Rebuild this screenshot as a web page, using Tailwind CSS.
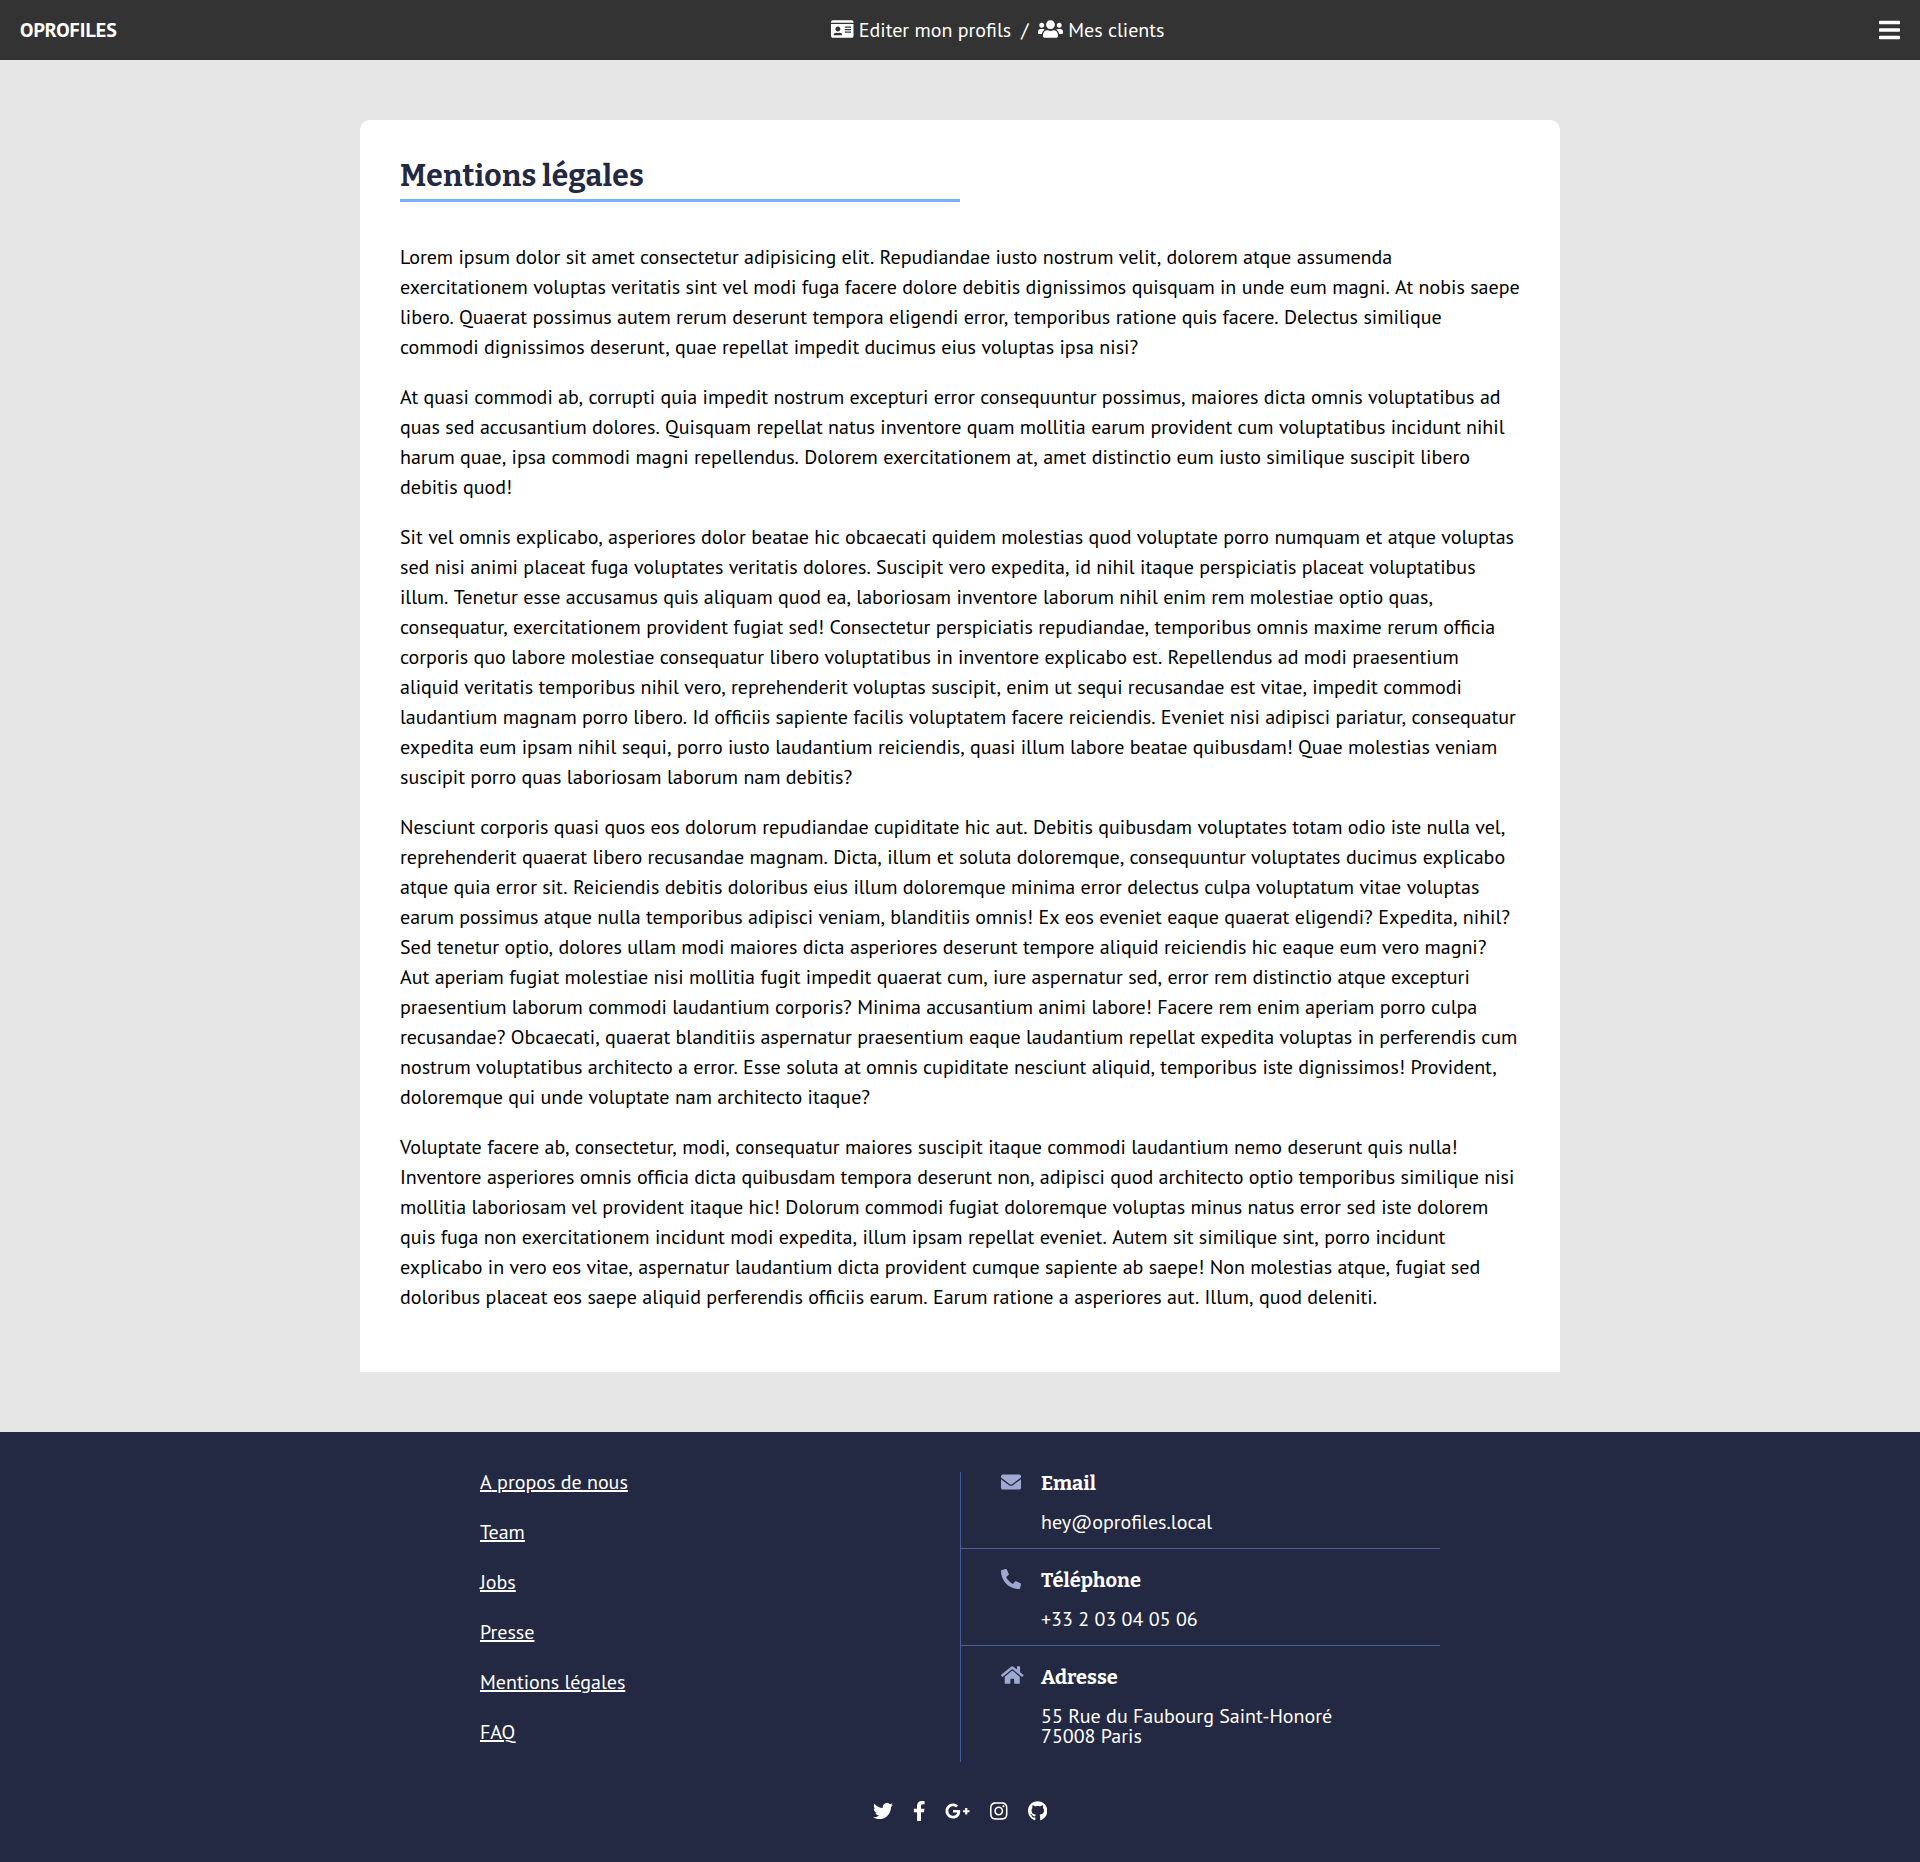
<!DOCTYPE html>
<html lang="fr">
<head>
<meta charset="utf-8">
<title>OPROFILES - Mentions légales</title>
<script src="https://cdn.jsdelivr.net/npm/@tailwindcss/browser@4"></script>
</head>
<body class="bg-[#e6e6e6] text-black text-[20px] leading-[20px] font-['PT_Sans','Noto_Sans',sans-serif]">
<header class="h-[60px] bg-[#333] text-white flex items-center justify-between px-5">
  <a class="font-bold">OPROFILES</a>
  <nav class="flex items-center">
    <a class="flex items-center"><svg class="h-5 w-[22.5px] mr-[5px] -mt-[2px]" viewBox="0 0 576 512" fill="currentColor"><path d="M528 32H48C21.500 32 0 53.500 0 80v16h576V80c0-26.500-21.500-48-48-48zM0 432c0 26.500 21.500 48 48 48h480c26.500 0 48-21.500 48-48V128H0v304zm352-232c0-4.400 3.600-8 8-8h144c4.400 0 8 3.600 8 8v16c0 4.400-3.600 8-8 8H360c-4.400 0-8-3.600-8-8v-16zm0 64c0-4.400 3.600-8 8-8h144c4.400 0 8 3.600 8 8v16c0 4.400-3.600 8-8 8H360c-4.400 0-8-3.600-8-8v-16zm0 64c0-4.400 3.600-8 8-8h144c4.400 0 8 3.600 8 8v16c0 4.400-3.600 8-8 8H360c-4.400 0-8-3.600-8-8v-16zM176 192c35.300 0 64 28.700 64 64s-28.700 64-64 64-64-28.700-64-64 28.700-64 64-64zM67.100 396.200C75.500 370.500 99.600 352 128 352h8.200c12.300 5.100 25.700 8 39.800 8s27.600-2.900 39.800-8h8.200c28.400 0 52.500 18.500 60.900 44.200 3.200 9.900-5.200 19.800-15.600 19.800H82.700c-10.400 0-18.800-10-15.600-19.800z"/></svg>Editer mon profils</a>
    <span class="px-[10px]">/</span>
    <a class="flex items-center"><svg class="h-5 w-[25px] mr-[5px] -mt-[2px]" viewBox="0 0 640 512" fill="currentColor"><path d="M96 224c35.300 0 64-28.700 64-64s-28.700-64-64-64-64 28.700-64 64 28.700 64 64 64zm448 0c35.300 0 64-28.700 64-64s-28.700-64-64-64-64 28.700-64 64 28.700 64 64 64zm32 32h-64c-17.600 0-33.500 7.100-45.100 18.600 40.300 22.100 68.900 62 75.100 109.400h66c17.700 0 32-14.300 32-32v-32c0-35.300-28.700-64-64-64zm-256 0c61.900 0 112-50.100 112-112S381.900 32 320 32 208 82.100 208 144s50.100 112 112 112zm76.800 32h-8.300c-20.800 10-43.900 16-68.500 16s-47.600-6-68.500-16h-8.300C179.600 288 128 339.600 128 403.200V432c0 26.500 21.500 48 48 48h288c26.500 0 48-21.500 48-48v-28.800c0-63.600-51.600-115.200-115.200-115.200zm-223.700-13.400C161.500 263.100 145.600 256 128 256H64c-35.300 0-64 28.700-64 64v32c0 17.700 14.300 32 32 32h65.900c6.300-47.400 34.900-87.300 75.200-109.400z"/></svg>Mes clients</a>
  </nav>
  <button aria-label="Menu"><svg class="h-6 w-[21px]" viewBox="0 0 448 512" fill="currentColor"><path d="M16 132h416c8.837 0 16-7.163 16-16V76c0-8.837-7.163-16-16-16H16C7.163 60 0 67.163 0 76v40c0 8.837 7.163 16 16 16zm0 160h416c8.837 0 16-7.163 16-16v-40c0-8.837-7.163-16-16-16H16c-8.837 0-16 7.163-16 16v40c0 8.837 7.163 16 16 16zm0 160h416c8.837 0 16-7.163 16-16v-40c0-8.837-7.163-16-16-16H16c-8.837 0-16 7.163-16 16v40c0 8.837 7.163 16 16 16z"/></svg></button>
</header>

<main class="py-[60px]">
  <article class="w-[1200px] mx-auto bg-white rounded-t-[10px] p-10 leading-[30px]">
    <h1 class="w-[560px] h-[42px] pt-px border-b-[3px] border-[#74b0fc] mb-10 text-[30px] leading-[30px] tracking-[0.25px] font-bold text-[#242943] font-['Bitter','Noto_Serif',serif]">Mentions légales</h1>
    <div id="legal" class="whitespace-nowrap">
    <p class="mb-5">Lorem ipsum dolor sit amet consectetur adipisicing elit. Repudiandae iusto nostrum velit, dolorem atque assumenda<br>exercitationem voluptas veritatis sint vel modi fuga facere dolore debitis dignissimos quisquam in unde eum magni. At nobis saepe<br>libero. Quaerat possimus autem rerum deserunt tempora eligendi error, temporibus ratione quis facere. Delectus similique<br>commodi dignissimos deserunt, quae repellat impedit ducimus eius voluptas ipsa nisi?</p>
    <p class="mb-5">At quasi commodi ab, corrupti quia impedit nostrum excepturi error consequuntur possimus, maiores dicta omnis voluptatibus ad<br>quas sed accusantium dolores. Quisquam repellat natus inventore quam mollitia earum provident cum voluptatibus incidunt nihil<br>harum quae, ipsa commodi magni repellendus. Dolorem exercitationem at, amet distinctio eum iusto similique suscipit libero<br>debitis quod!</p>
    <p class="mb-5">Sit vel omnis explicabo, asperiores dolor beatae hic obcaecati quidem molestias quod voluptate porro numquam et atque voluptas<br>sed nisi animi placeat fuga voluptates veritatis dolores. Suscipit vero expedita, id nihil itaque perspiciatis placeat voluptatibus<br>illum. Tenetur esse accusamus quis aliquam quod ea, laboriosam inventore laborum nihil enim rem molestiae optio quas,<br>consequatur, exercitationem provident fugiat sed! Consectetur perspiciatis repudiandae, temporibus omnis maxime rerum officia<br>corporis quo labore molestiae consequatur libero voluptatibus in inventore explicabo est. Repellendus ad modi praesentium<br>aliquid veritatis temporibus nihil vero, reprehenderit voluptas suscipit, enim ut sequi recusandae est vitae, impedit commodi<br>laudantium magnam porro libero. Id officiis sapiente facilis voluptatem facere reiciendis. Eveniet nisi adipisci pariatur, consequatur<br>expedita eum ipsam nihil sequi, porro iusto laudantium reiciendis, quasi illum labore beatae quibusdam! Quae molestias veniam<br>suscipit porro quas laboriosam laborum nam debitis?</p>
    <p class="mb-5">Nesciunt corporis quasi quos eos dolorum repudiandae cupiditate hic aut. Debitis quibusdam voluptates totam odio iste nulla vel,<br>reprehenderit quaerat libero recusandae magnam. Dicta, illum et soluta doloremque, consequuntur voluptates ducimus explicabo<br>atque quia error sit. Reiciendis debitis doloribus eius illum doloremque minima error delectus culpa voluptatum vitae voluptas<br>earum possimus atque nulla temporibus adipisci veniam, blanditiis omnis! Ex eos eveniet eaque quaerat eligendi? Expedita, nihil?<br>Sed tenetur optio, dolores ullam modi maiores dicta asperiores deserunt tempore aliquid reiciendis hic eaque eum vero magni?<br>Aut aperiam fugiat molestiae nisi mollitia fugit impedit quaerat cum, iure aspernatur sed, error rem distinctio atque excepturi<br>praesentium laborum commodi laudantium corporis? Minima accusantium animi labore! Facere rem enim aperiam porro culpa<br>recusandae? Obcaecati, quaerat blanditiis aspernatur praesentium eaque laudantium repellat expedita voluptas in perferendis cum<br>nostrum voluptatibus architecto a error. Esse soluta at omnis cupiditate nesciunt aliquid, temporibus iste dignissimos! Provident,<br>doloremque qui unde voluptate nam architecto itaque?</p>
    <p class="mb-5">Voluptate facere ab, consectetur, modi, consequatur maiores suscipit itaque commodi laudantium nemo deserunt quis nulla!<br>Inventore asperiores omnis officia dicta quibusdam tempora deserunt non, adipisci quod architecto optio temporibus similique nisi<br>mollitia laboriosam vel provident itaque hic! Dolorum commodi fugiat doloremque voluptas minus natus error sed iste dolorem<br>quis fuga non exercitationem incidunt modi expedita, illum ipsam repellat eveniet. Autem sit similique sint, porro incidunt<br>explicabo in vero eos vitae, aspernatur laudantium dicta provident cumque sapiente ab saepe! Non molestias atque, fugiat sed<br>doloribus placeat eos saepe aliquid perferendis officiis earum. Earum ratione a asperiores aut. Illum, quod deleniti.</p>
    </div>
  </article>
</main>

<footer class="bg-[#242943] text-white pt-10 pb-[41px]">
  <div class="w-[960px] mx-auto grid grid-cols-2">
    <ul class="flex flex-col gap-[30px] underline">
      <li><a>A<span class="tracking-[0.01px]"> </span>propos de nous</a></li>
      <li><a>Team</a></li>
      <li><a>Jobs</a></li>
      <li><a>Presse</a></li>
      <li><a>Mentions légales</a></li>
      <li><a>FAQ</a></li>
    </ul>
    <div class="border-l border-[#4d5d9c]">
      <section class="flex pl-10 pb-4 border-b border-[#4d5d9c]">
        <div class="w-10 text-[#9fa8d0]"><svg class="size-5" viewBox="0 0 512 512" fill="currentColor"><path d="M502.300 190.800c3.900-3.100 9.700-.2 9.700 4.700V400c0 26.500-21.500 48-48 48H48c-26.500 0-48-21.500-48-48V195.600c0-5 5.700-7.800 9.700-4.700 22.400 17.400 52.100 39.500 154.100 113.600 21.100 15.400 56.700 47.800 92.200 47.600 35.700.3 72-32.800 92.300-47.600 102-74.100 131.600-96.300 154-113.700zM256 320c23.200.4 56.600-29.200 73.400-41.400 132.700-96.300 142.800-104.700 173.400-128.700 5.800-4.500 9.200-11.500 9.200-18.900v-19c0-26.500-21.500-48-48-48H48c-26.500 0-48 21.500-48 48v19c0 7.400 3.400 14.300 9.200 18.900 30.600 23.900 40.700 32.400 173.400 128.700 16.800 12.200 50.200 41.800 73.400 41.400z"/></svg></div>
        <div><h2 class="pt-px mb-[19px] font-bold font-['Bitter','Noto_Serif',serif]">Email</h2><p>hey@oprofiles.local</p></div>
      </section>
      <section class="flex pl-10 pt-5 pb-4 border-b border-[#4d5d9c]">
        <div class="w-10 text-[#9fa8d0]"><svg class="size-5" viewBox="0 0 512 512" fill="currentColor"><path transform="matrix(-1 0 0 1 512 0)" d="M493.400 24.600l-104-24c-11.300-2.600-22.900 3.300-27.500 13.900l-48 112c-4.200 9.800-1.400 21.300 6.900 28l60.600 49.600c-36 76.700-98.900 140.500-177.200 177.200l-49.600-60.600c-6.800-8.300-18.200-11.100-28-6.900l-112 48C3.900 366.500-2 378.100.6 389.400l24 104C27.100 504.200 36.700 512 48 512c256.100 0 464-207.500 464-464 0-11.200-7.700-20.900-18.600-23.400z"/></svg></div>
        <div><h2 class="pt-px mb-[19px] font-bold font-['Bitter','Noto_Serif',serif]">Téléphone</h2><p>+33 2 03 04 05 06</p></div>
      </section>
      <section class="flex pl-10 pt-5 pb-4">
        <div class="w-10 text-[#9fa8d0]"><svg class="h-5 w-[22.5px] -mt-px" viewBox="0 0 576 512" fill="currentColor"><path d="M280.370 148.260L96 300.110V464a16 16 0 0 0 16 16l112.060-.29a16 16 0 0 0 15.920-16V368a16 16 0 0 1 16-16h64a16 16 0 0 1 16 16v95.640a16 16 0 0 0 16 16.050L464 480a16 16 0 0 0 16-16V300L295.670 148.260a12.190 12.190 0 0 0-15.300 0zM571.600 251.470L488 182.560V44.050a12 12 0 0 0-12-12h-56a12 12 0 0 0-12 12v72.610L318.470 43a48 48 0 0 0-61 0L4.340 251.470a12 12 0 0 0-1.600 16.900l25.500 31A12 12 0 0 0 45.150 301l235.220-193.740a12.190 12.190 0 0 1 15.300 0L530.900 301a12 12 0 0 0 16.900-1.600l25.500-31a12 12 0 0 0-1.700-16.930z"/></svg></div>
        <div><h2 class="pt-px mb-[19px] font-bold font-['Bitter','Noto_Serif',serif]">Adresse</h2><p>55 Rue du Faubourg Saint-Honoré<br>75008 Paris</p></div>
      </section>
    </div>
  </div>
  <div class="mt-[39px] flex justify-center gap-5">
    <svg class="size-5" viewBox="0 0 512 512" fill="currentColor"><path d="M459.370 151.716c.325 4.548.325 9.097.325 13.645 0 138.720-105.583 298.558-298.558 298.558-59.452 0-114.680-17.219-161.137-47.106 8.447.974 16.568 1.299 25.340 1.299 49.055 0 94.213-16.568 130.274-44.832-46.132-.975-84.792-31.188-98.112-72.772 6.498.974 12.995 1.624 19.818 1.624 9.421 0 18.843-1.300 27.614-3.573-48.081-9.747-84.143-51.980-84.143-102.985v-1.299c13.969 7.797 30.214 12.670 47.431 13.319-28.264-18.843-46.781-51.005-46.781-87.391 0-19.492 5.197-37.360 14.294-52.954 51.655 63.675 129.300 105.258 216.365 109.807-1.624-7.797-2.599-15.918-2.599-24.040 0-57.828 46.782-104.934 104.934-104.934 30.213 0 57.502 12.670 76.670 33.137 23.715-4.548 46.456-13.320 66.599-25.340-7.798 24.366-24.366 44.833-46.132 57.827 21.117-2.273 41.584-8.122 60.426-16.243-14.292 20.791-32.161 39.308-52.628 54.253z"/></svg>
    <svg class="h-5 w-[12.5px]" viewBox="0 0 320 512" fill="currentColor"><path d="M279.140 288l14.220-92.660h-88.910v-60.130c0-25.350 12.420-50.060 52.240-50.060h40.420V6.260S260.430 0 225.360 0c-73.220 0-121.080 44.380-121.080 124.720v70.620H22.890V288h81.390v224h100.170V288z"/></svg>
    <svg class="h-5 w-[25px]" viewBox="0 0 640 512" fill="currentColor"><path d="M386.061 228.496c1.834 9.692 3.143 19.384 3.143 31.956C389.204 370.205 315.599 448 204.800 448c-106.084 0-192-85.915-192-192s85.916-192 192-192c51.864 0 95.083 18.859 128.611 50.292l-52.126 50.030c-14.145-13.621-39.028-29.599-76.485-29.599-65.484 0-118.920 54.221-118.920 121.277 0 67.056 53.436 121.277 118.920 121.277 75.961 0 104.513-54.745 108.965-82.773H204.800v-66.009h181.261zm185.406 6.437V179.200h-56.001v55.733h-55.733v56.001h55.733v55.733h56.001v-55.733H627.200v-56.001h-55.733z"/></svg>
    <svg class="h-5 w-[17.5px]" viewBox="0 0 448 512" fill="currentColor"><path d="M224.100 141c-63.600 0-114.900 51.300-114.900 114.900s51.300 114.900 114.900 114.900S339 319.500 339 255.900 287.700 141 224.100 141zm0 189.600c-41.100 0-74.700-33.500-74.700-74.700s33.500-74.700 74.700-74.700 74.700 33.500 74.700 74.700-33.600 74.700-74.700 74.700zm146.400-194.300c0 14.900-12 26.800-26.800 26.800-14.900 0-26.800-12-26.800-26.800s12-26.800 26.800-26.800 26.800 12 26.800 26.800zm76.100 27.200c-1.700-35.900-9.900-67.700-36.200-93.900-26.200-26.200-58-34.400-93.900-36.200-37-2.100-147.900-2.100-184.900 0-35.800 1.700-67.600 9.900-93.900 36.100s-34.400 58-36.200 93.900c-2.100 37-2.100 147.900 0 184.900 1.700 35.900 9.900 67.700 36.200 93.900s58 34.400 93.900 36.200c37 2.100 147.900 2.100 184.900 0 35.900-1.700 67.700-9.900 93.900-36.200 26.200-26.200 34.400-58 36.200-93.900 2.100-37 2.100-147.800 0-184.800zM398.800 388c-7.800 19.600-22.900 34.700-42.600 42.600-29.500 11.700-99.500 9-132.100 9s-102.700 2.600-132.100-9c-19.600-7.800-34.700-22.900-42.600-42.600-11.700-29.500-9-99.500-9-132.100s-2.600-102.700 9-132.100c7.800-19.600 22.900-34.700 42.600-42.600 29.500-11.700 99.500-9 132.100-9s102.700-2.600 132.100 9c19.600 7.800 34.700 22.900 42.600 42.600 11.700 29.500 9 99.500 9 132.100s2.700 102.700-9 132.100z"/></svg>
    <svg class="h-5 w-[19.375px]" viewBox="0 0 496 512" fill="currentColor"><path d="M165.900 397.400c0 2-2.300 3.600-5.200 3.600-3.300.3-5.600-1.300-5.600-3.600 0-2 2.300-3.600 5.200-3.600 3-.3 5.600 1.300 5.600 3.600zM244.800 8C106.100 8 0 113.300 0 252c0 110.900 69.800 205.800 169.500 239.200 12.800 2.300 17.300-5.600 17.300-12.100 0-6.200-.3-40.400-.3-61.400 0 0-70 15-84.700-29.800 0 0-11.400-29.100-27.800-36.600 0 0-22.900-15.700 1.600-15.400 0 0 24.900 2 38.600 25.800 21.900 38.600 58.600 27.500 72.900 20.900 2.300-16 8.800-27.100 16-33.700-55.900-6.200-112.300-14.300-112.300-110.500 0-27.500 7.600-41.300 23.600-58.900-2.600-6.500-11.100-33.300 2.600-67.900 20.900-6.500 69 27 69 27 20-5.600 41.500-8.500 62.800-8.500s42.800 2.900 62.800 8.500c0 0 48.100-33.600 69-27 13.700 34.700 5.200 61.400 2.600 67.900 16 17.700 25.800 31.500 25.800 58.900 0 96.500-58.900 104.200-114.800 110.500 9.200 7.900 17 22.900 17 46.400 0 33.700-.3 75.400-.3 83.600 0 6.500 4.600 14.400 17.300 12.100C428.200 457.800 496 362.900 496 252 496 113.300 383.500 8 244.800 8z"/></svg>
  </div>
</footer>
<script>
// Isolate each space in its own run so that PT Sans does not kern words across it.
document.querySelectorAll('#legal p').forEach(p => {
  p.innerHTML = p.innerHTML.replace(/ /g, '<span class="tracking-[0.01px]"> </span>');
});
</script>
</body>
</html>
